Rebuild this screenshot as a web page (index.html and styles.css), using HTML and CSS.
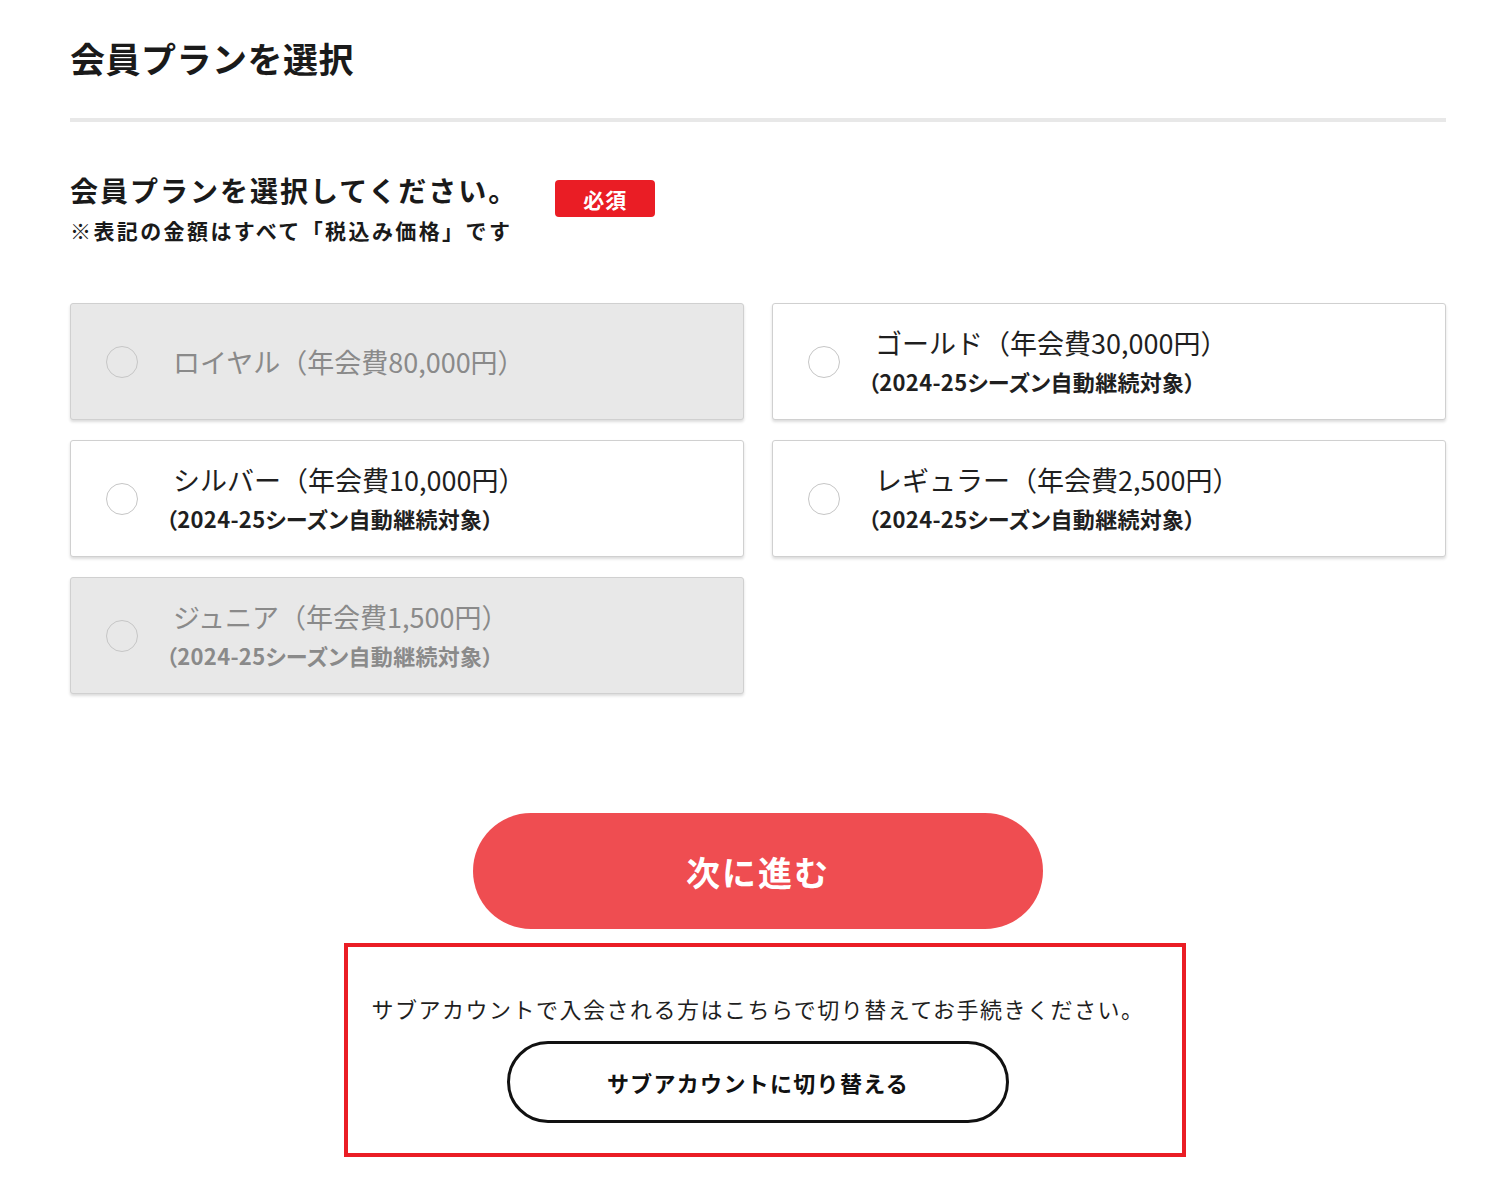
FILE: index.html
```html
<!DOCTYPE html>
<html lang="ja">
<head>
<meta charset="utf-8">
<title>会員プランを選択</title>
<link rel="stylesheet" href="styles.css">
</head>
<body>
<main class="page">
  <h1 class="page-title">会員プランを選択</h1>
  <hr class="divider">

  <div class="field-head">
    <div class="field-text">
      <p class="field-label">会員プランを選択してください。</p>
      <p class="field-note">※表記の金額はすべて「税込み価格」です</p>
    </div>
    <span class="badge">必須</span>
  </div>

  <div class="plans">
    <label class="plan is-disabled">
      <span class="radio"></span>
      <span class="plan-text">
        <span class="plan-name">ロイヤル（年会費80,000円）</span>
      </span>
    </label>
    <label class="plan">
      <span class="radio"></span>
      <span class="plan-text">
        <span class="plan-name">ゴールド（年会費30,000円）</span>
        <span class="plan-sub">（2024-25シーズン自動継続対象）</span>
      </span>
    </label>
    <label class="plan">
      <span class="radio"></span>
      <span class="plan-text">
        <span class="plan-name">シルバー（年会費10,000円）</span>
        <span class="plan-sub">（2024-25シーズン自動継続対象）</span>
      </span>
    </label>
    <label class="plan">
      <span class="radio"></span>
      <span class="plan-text">
        <span class="plan-name">レギュラー（年会費2,500円）</span>
        <span class="plan-sub">（2024-25シーズン自動継続対象）</span>
      </span>
    </label>
    <label class="plan is-disabled">
      <span class="radio"></span>
      <span class="plan-text">
        <span class="plan-name">ジュニア（年会費1,500円）</span>
        <span class="plan-sub">（2024-25シーズン自動継続対象）</span>
      </span>
    </label>
  </div>

  <div class="actions">
    <button class="btn-next" type="button">次に進む</button>
  </div>

  <section class="sub-box">
    <p class="sub-text">サブアカウントで入会される方はこちらで切り替えてお手続きください。</p>
    <button class="btn-sub" type="button">サブアカウントに切り替える</button>
  </section>
</main>
</body>
</html>
```

FILE: styles.css
```css
* {
  box-sizing: border-box;
}

html, body {
  margin: 0;
  padding: 0;
  background: #ffffff;
}

body {
  font-family: "Noto Sans CJK JP", "Noto Sans", sans-serif;
  color: #222222;
}

.page {
  width: 1376px;
  margin-left: 70px;
  padding-top: 33px;
  padding-bottom: 40px;
}

.page-title {
  margin: 0;
  font-size: 35px;
  line-height: 50px;
  font-weight: 700;
  letter-spacing: 0.5px;
  color: #1a1a1a;
}

.divider {
  margin: 35px 0 0 0;
  height: 4px;
  border: 0;
  background: #e8e8e8;
}

.field-head {
  display: flex;
  align-items: flex-start;
  gap: 37px;
  margin-top: 50px;
}

.field-label {
  margin: 0;
  font-size: 28px;
  line-height: 36px;
  font-weight: 700;
  letter-spacing: 2px;
  color: #1a1a1a;
}

.field-note {
  margin: 5px 0 0 0;
  font-size: 21px;
  line-height: 34px;
  font-weight: 700;
  letter-spacing: 2.4px;
  color: #1a1a1a;
}

.badge {
  margin-top: 8px;
  width: 100px;
  height: 37px;
  display: flex;
  align-items: center;
  justify-content: center;
  background: #ea1d25;
  color: #ffffff;
  border-radius: 4px;
  font-size: 21px;
  font-weight: 700;
  letter-spacing: 1px;
}

.plans {
  margin-top: 56px;
  display: grid;
  grid-template-columns: 1fr 1fr;
  column-gap: 28px;
  row-gap: 20px;
}

.plan {
  height: 117px;
  display: flex;
  align-items: center;
  padding-left: 35px;
  background: #ffffff;
  border: 1px solid #d0d0d0;
  border-radius: 3px;
  box-shadow: 0 2px 3px rgba(0, 0, 0, 0.14);
  cursor: pointer;
}

.plan.is-disabled {
  background: #e8e8e8;
  cursor: default;
}

.radio {
  flex: none;
  width: 32px;
  height: 32px;
  border: 1.5px solid #c6c6c6;
  border-radius: 50%;
}

.plan-text {
  margin-left: 33px;
  display: flex;
  flex-direction: column;
}

.plan-name {
  font-size: 27px;
  line-height: 38px;
  font-weight: 400;
  color: #1f1f1f;
  padding-left: 2px;
}

.plan-sub {
  font-size: 22px;
  line-height: 38px;
  font-weight: 700;
  color: #1f1f1f;
  font-feature-settings: "palt";
  letter-spacing: 0.3px;
  margin-left: -5px;
}

.plan.is-disabled .plan-name,
.plan.is-disabled .plan-sub {
  color: #8a8a8a;
}

.actions {
  margin-top: 119px;
  display: flex;
  justify-content: center;
}

.btn-next {
  width: 570px;
  height: 116px;
  border: 0;
  border-radius: 58px;
  background: #ef4d51;
  color: #ffffff;
  font-family: inherit;
  font-size: 34px;
  font-weight: 700;
  letter-spacing: 2px;
  cursor: pointer;
}

.sub-box {
  margin-top: 14px;
  margin-left: 274px;
  width: 842px;
  border: 4px solid #ea1d25;
  padding: 45px 38px 30px 24px;
  display: flex;
  flex-direction: column;
  align-items: center;
}

.sub-text {
  margin: 0;
  font-size: 22px;
  line-height: 32px;
  letter-spacing: 1.5px;
  color: #1f1f1f;
  white-space: nowrap;
}

.btn-sub {
  margin-top: 17px;
  width: 502px;
  height: 82px;
  border: 3px solid #111111;
  border-radius: 41px;
  background: #ffffff;
  color: #111111;
  font-family: inherit;
  font-size: 22px;
  font-weight: 700;
  letter-spacing: 1.3px;
  cursor: pointer;
}
```
